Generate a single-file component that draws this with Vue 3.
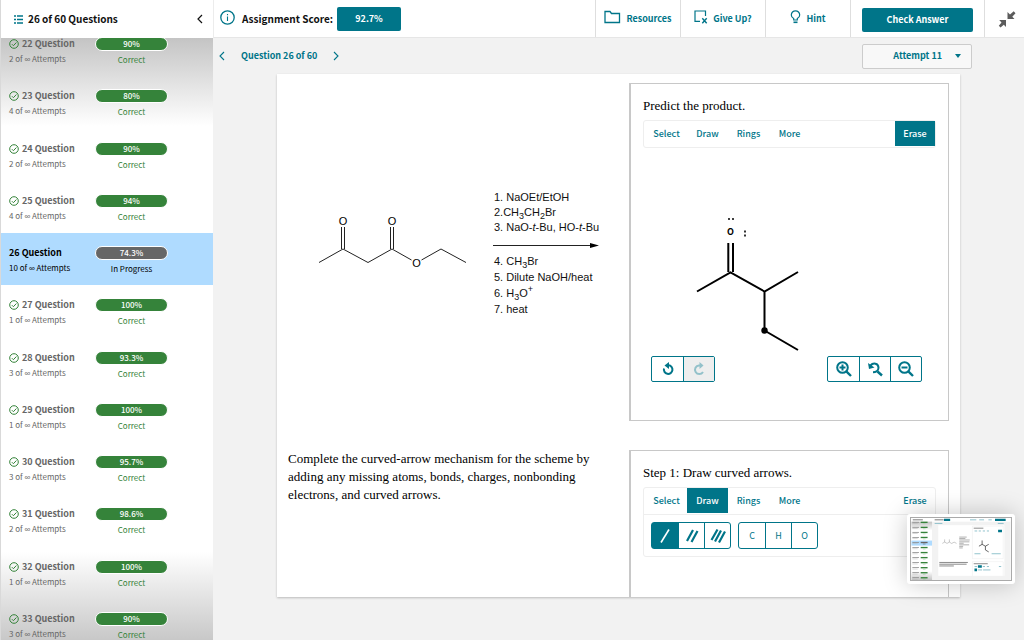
<script setup>
const questions = [
  { n: 22, tries: 2, score: '90%' },
  { n: 23, tries: 4, score: '80%' },
  { n: 24, tries: 2, score: '90%' },
  { n: 25, tries: 4, score: '94%' },
  { n: 26, tries: 10, score: '74.3%', current: true },
  { n: 27, tries: 1, score: '100%' },
  { n: 28, tries: 3, score: '93.3%' },
  { n: 29, tries: 1, score: '100%' },
  { n: 30, tries: 3, score: '95.7%' },
  { n: 31, tries: 2, score: '98.6%' },
  { n: 32, tries: 1, score: '100%' },
  { n: 33, tries: 3, score: '90%' },
]
const tabs = ['Select', 'Draw', 'Rings', 'More']
const atoms = ['C', 'H', 'O']
</script>

<template>
  <div class="app">
    <aside class="sidebar">
      <header class="side-head">
        <svg class="list-icon" width="9" height="9" viewBox="0 0 9 9" aria-hidden="true">
          <path d="M0 1h2M3 1h6M0 4.5h2M3 4.5h6M0 8h2M3 8h6" stroke="#007589" stroke-width="1.4" />
        </svg>
        <span class="side-title">26 of 60 Questions</span>
        <button class="bare collapse" aria-label="Collapse question list">
          <svg width="6" height="10" viewBox="0 0 6 10"><path d="M5 1L1 5l4 4" fill="none" stroke="#111" stroke-width="1.2" /></svg>
        </button>
      </header>
      <div class="scroll">
        <ul class="questions">
          <li v-for="q in questions" :key="q.n" :class="{ current: q.current }">
            <div class="q-info">
              <div class="q-name">
                <svg v-if="!q.current" width="10" height="10" viewBox="0 0 10 10" aria-hidden="true">
                  <circle cx="5" cy="5" r="4.3" fill="none" stroke="#35833a" stroke-width="1" />
                  <path d="M2.9 5.2l1.5 1.5 3-3.2" fill="none" stroke="#35833a" stroke-width="1" />
                </svg>
                <span>{{ q.n }} Question</span>
              </div>
              <div class="q-tries">{{ q.tries }} of <span class="inf">∞</span> Attempts</div>
            </div>
            <div class="q-result">
              <div class="pill">{{ q.score }}</div>
              <div class="q-state">{{ q.current ? 'In Progress' : 'Correct' }}</div>
            </div>
          </li>
        </ul>
      </div>
    </aside>

    <main class="main">
      <header class="topbar">
        <svg class="info" width="15" height="15" viewBox="0 0 15 15" aria-hidden="true">
          <circle cx="7.5" cy="7.5" r="6.7" fill="none" stroke="#007589" stroke-width="1.3" />
          <path d="M7.5 6.5V11M7.5 4v1.2" stroke="#007589" stroke-width="1.1" />
        </svg>
        <span class="score-label">Assignment Score:</span>
        <span class="score">92.7%</span>
        <nav class="actions">
          <button class="action">
            <svg width="17" height="14" viewBox="0 0 17 14"><path d="M1 12.5V1.5h5l1.5 2H15.500v9z" fill="none" stroke="#007589" stroke-width="1.3" /></svg>
            Resources
          </button>
          <button class="action">
            <svg width="14" height="14" viewBox="0 0 14 14">
              <path d="M6 11.400H1V1h10.500v5" fill="none" stroke="#007589" stroke-width="1.2" />
              <path d="M8.300 8.200l4.400 5M12.700 8.200l-4.400 5" stroke="#007589" stroke-width="1.400" />
            </svg>
            Give Up?
          </button>
          <button class="action">
            <svg width="11" height="14" viewBox="0 0 11 14">
              <path d="M3.700 10V8.600C2.300 7.800 1.300 6.700 1.300 5a4.200 4.200 0 0 1 8.400 0c0 1.700-1 2.800-2.400 3.600V10z" fill="none" stroke="#007589" stroke-width="1.200" />
              <path d="M3.500 12.300h4" stroke="#007589" stroke-width="1.600" />
            </svg>
            Hint
          </button>
          <div class="check-cell"><button class="check">Check Answer</button></div>
          <button class="bare shrink" aria-label="Exit full screen">
            <svg width="18" height="18" viewBox="0 0 18 18">
              <path d="M9.500 2v7H16.500L14.300 6.800 17.500 3.200 15.700 1.200 12 4.500zM1.200 10H8v7L5.800 14.800 2.500 17.500 0.800 15.700 3.500 12.500z" fill="#5c5c5c" />
            </svg>
          </button>
        </nav>
      </header>

      <div class="subbar">
        <button class="bare" aria-label="Previous question">
          <svg width="6" height="10" viewBox="0 0 6 10"><path d="M5 1L1 5l4 4" fill="none" stroke="#007589" stroke-width="1.1" /></svg>
        </button>
        <span class="crumb">Question 26 of 60</span>
        <button class="bare" aria-label="Next question">
          <svg width="6" height="10" viewBox="0 0 6 10"><path d="M1 1l4 4-4 4" fill="none" stroke="#007589" stroke-width="1.1" /></svg>
        </button>
        <button class="attempt">
          Attempt 11
          <svg width="6" height="4" viewBox="0 0 6 4"><path d="M0 0h6L3 4z" fill="#007589" /></svg>
        </button>
      </div>

      <section class="paper">
        <div class="scheme">
          <svg class="reactant" width="155" height="127" viewBox="315 190 155 127" role="img" aria-label="Ethyl acetoacetate">
            <path d="M319 262.500L343 249l25 13.500L392 249l19.500 11M421.500 260L441 249l25 13.500M341.500 249V227M344.500 249V227M390.500 249V227M393.500 249V227" fill="none" stroke="#222" stroke-width="1" />
            <text x="343" y="225" text-anchor="middle">O</text>
            <text x="392" y="225" text-anchor="middle">O</text>
            <text x="416.500" y="267" text-anchor="middle">O</text>
          </svg>
          <div class="conditions">
            <div class="above">
              <div>1. NaOEt/EtOH</div>
              <div>2.CH<sub>3</sub>CH<sub>2</sub>Br</div>
              <div>3. NaO-<i>t</i>-Bu, HO-<i>t</i>-Bu</div>
            </div>
            <svg class="arrow" width="106" height="18" viewBox="0 0 106 18" aria-hidden="true">
              <path d="M0 10.500h98" stroke="#222" stroke-width="1" />
              <path d="M97 8l9 2.500-9 2.500z" fill="#000" />
            </svg>
            <div class="below">
              <div>4. CH<sub>3</sub>Br</div>
              <div>5. Dilute NaOH/heat</div>
              <div>6. H<sub>3</sub>O<sup>+</sup></div>
              <div>7. heat</div>
            </div>
          </div>
        </div>

        <article class="panel">
          <h2>Predict the product.</h2>
          <div class="editor">
            <div class="tabs">
              <button v-for="t in tabs" :key="t" class="tab">{{ t }}</button>
              <button class="tab erase on">Erase</button>
            </div>
          </div>
          <svg class="canvas" viewBox="643 148 293 208" role="img" aria-label="3-methylpentan-2-one">
            <path d="M697 291.500l33.500-19 34 19L798 272M764.500 291.500v39L798 350M728.300 272V243M733 272V243" fill="none" stroke="#000" stroke-width="2" />
            <circle cx="764.500" cy="330.500" r="3.200" />
            <text x="730.500" y="235" text-anchor="middle">O</text>
            <path d="M728 219h2M732 219h2M745 230.500v2M745 234.500v2" stroke="#000" stroke-width="1.600" />
          </svg>
          <div class="tools">
            <div class="group">
              <button aria-label="Undo">
                <svg width="14" height="14" viewBox="0 0 14 14"><path d="M3 6.500a4.300 4.300 0 1 0 4.500-3.200" fill="none" stroke="#007589" stroke-width="2" /><path d="M3.500 3.500L8 0v7z" fill="#007589" /></svg>
              </button>
              <button class="disabled" disabled aria-label="Redo">
                <svg width="14" height="14" viewBox="0 0 14 14"><path d="M11 10a4.300 4.300 0 1 1-4-6.500h1" fill="none" stroke="#93c1ca" stroke-width="2" /><path d="M11.500 3.500L7.500 0v7z" fill="#93c1ca" /></svg>
              </button>
            </div>
            <div class="group">
              <button aria-label="Zoom in">
                <svg width="16" height="16" viewBox="0 0 16 16"><circle cx="6.500" cy="6.500" r="5.300" fill="none" stroke="#007589" stroke-width="2" /><path d="M10.300 10.300L15 15" stroke="#007589" stroke-width="2.400" /><path d="M3.500 6.500h6M6.500 3.500v6" stroke="#007589" stroke-width="2" /></svg>
              </button>
              <button aria-label="Reset zoom">
                <svg width="16" height="16" viewBox="0 0 16 16"><path d="M3.500 4.500C6 1.500 11.500 2 11.500 6.800c0 3-2.800 4.400-5.500 4.400" fill="none" stroke="#007589" stroke-width="2" /><path d="M1 2l1 6 5.500-1.500z" fill="#007589" /><path d="M10.500 10.500L15 14.500" stroke="#007589" stroke-width="2.400" /></svg>
              </button>
              <button aria-label="Zoom out">
                <svg width="16" height="16" viewBox="0 0 16 16"><circle cx="6.500" cy="6.500" r="5.300" fill="none" stroke="#007589" stroke-width="2" /><path d="M10.300 10.300L15 15" stroke="#007589" stroke-width="2.400" /><path d="M3.500 6.500h6" stroke="#007589" stroke-width="2" /></svg>
              </button>
            </div>
          </div>
        </article>

        <p class="prompt">Complete the curved-arrow mechanism for the scheme by adding any missing atoms, bonds, charges, nonbonding electrons, and curved arrows.</p>

        <article class="panel open">
          <h2>Step 1: Draw curved arrows.</h2>
          <div class="editor">
            <div class="tabs">
              <button v-for="t in tabs" :key="t" class="tab" :class="{ on: t === 'Draw' }">{{ t }}</button>
              <button class="tab erase">Erase</button>
            </div>
            <div class="palette">
              <div class="bonds">
                <button class="on" aria-label="Single bond">
                  <svg width="16" height="16" viewBox="0 0 16 16"><path d="M4 14.500l8-13" stroke="#fff" stroke-width="1.600" /></svg>
                </button>
                <button aria-label="Double bond">
                  <svg width="16" height="16" viewBox="0 0 16 16"><path d="M3 13L9 2M7.500 14L13.500 3" stroke="#007589" stroke-width="2.200" /></svg>
                </button>
                <button aria-label="Triple bond">
                  <svg width="16" height="16" viewBox="0 0 16 16"><path d="M1.500 12L7.500 1.500M5 13.500l6-11M9 14.500l6-11" stroke="#007589" stroke-width="2.200" /></svg>
                </button>
              </div>
              <div class="bonds atoms">
                <button v-for="a in atoms" :key="a">{{ a }}</button>
              </div>
            </div>
          </div>
        </article>
      </section>
    </main>

    <div class="preview">
      <svg viewBox="0 0 1024 640" width="102" height="64" role="img" aria-label="Page preview">
        <defs>
          <linearGradient id="fade" x1="0" y1="0" x2="0" y2="1">
            <stop offset="0" stop-color="#c4c4c4" /><stop offset=".15" stop-color="#fff" />
            <stop offset=".85" stop-color="#fff" /><stop offset="1" stop-color="#c4c4c4" />
          </linearGradient>
        </defs>
        <rect width="1024" height="640" fill="#f2f2f2" />
        <rect width="1024" height="38" fill="#fff" />
        <rect y="38" width="213" height="602" fill="url(#fade)" />
        <rect y="233" width="213" height="52" fill="#afdbff" />
        <rect x="277" y="74" width="683" height="523" fill="#fff" />
        <g v-for="(q, i) in questions" :key="q.n">
          <rect x="96" :y="38 + i * 52" width="71" height="14" :fill="q.current ? '#666' : '#35833a'" />
          <rect x="10" :y="40 + i * 52" width="68" height="8" fill="#8a8a8a" />
          <rect x="10" :y="56 + i * 52" width="55" height="5" fill="#b5b5b5" />
          <rect x="118" :y="58 + i * 52" width="28" height="5" :fill="q.current ? '#555' : '#9ec9a0'" />
        </g>
        <path d="M14 19h104M240 19h92" stroke="#666" stroke-width="9" />
        <path d="M240 56h80M605 19h65M700 19h50M795 19h35M892 56h60" stroke="#73b3bf" stroke-width="8" />
        <path d="M336 7h64v24h-64zM863 8h110v24H863zM895 122h40v25h-40zM687 488h40v25h-40zM651 522h26v27h-26z" fill="#007589" />
        <path d="M319 262l24-13 25 13 24-13 24 14 25-14 25 13M343 249v-28M392 249v-28" fill="none" stroke="#777" stroke-width="4" />
        <path d="M494 197h77M494 212h63M494 227h108M494 246h105M494 261h46M494 277h102M494 293h40M494 309h36" stroke="#777" stroke-width="6" />
        <path d="M697 291l33-19 34 19 34-19M764 291v39l34 20M730 272v-40" fill="none" stroke="#222" stroke-width="7" />
        <path d="M630 420V84h318v336zM630 597V451h318v146" fill="none" stroke="#ddd" stroke-width="3" />
        <path d="M643 105h100M643 472h145M288 459h295M288 477h282M288 495h150" stroke="#555" stroke-width="7" />
        <path d="M652 134h27M695 134h22M737 134h23M779 134h22M651 369h62M828 369h94M652 501h27M737 501h23M779 501h22M903 501h24M685 536h45M740 536h76" stroke="#82bac5" stroke-width="9" />
      </svg>
    </div>
  </div>
</template>

<style>
body { margin: 0; }
</style>

<style scoped>
* { box-sizing: border-box; }
.app {
  display: flex;
  height: 100vh;
  overflow: hidden;
  background: #f2f2f2;
  font: 9px/14px "Noto Sans CJK SC", "Source Sans Pro", sans-serif;
  color: #111;
}
button { margin: 0; padding: 0; border: 0; font: inherit; color: inherit; background: none; cursor: pointer; }
svg { display: block; flex: none; }
.bare { display: flex; align-items: center; justify-content: center; padding: 4px; }

.sidebar { display: flex; flex-direction: column; flex: none; width: 213px; border-left: 1px solid #d9d9d9; background: #fff; }
.side-head { display: flex; align-items: center; height: 38px; flex: none; padding: 0 6px 0 13px; }
.side-title { margin-left: 5px; font-size: 10px; font-weight: 700; }
.collapse { margin-left: auto; }
.scroll {
  display: flex;
  flex: 1;
  min-height: 0;
  overflow: hidden;
  background: linear-gradient(#c4c4c4, #fff 88px, #fff calc(100% - 88px), #c8c8c8);
}
.questions { flex: 1; display: grid; grid-auto-rows: 1fr; margin: -14px 0 -11px; padding: 0; list-style: none; }
.questions li { display: flex; padding: 13px 0 0 7px; color: #666; }
.q-info { width: 87px; }
.q-name { display: flex; align-items: center; gap: 3px; height: 14px; padding-left: 1px; font-size: 9px; font-weight: 700; white-space: nowrap; }
.q-tries { margin-top: 1px; font-size: 8px; padding-left: 1px; white-space: nowrap; }
.inf { font-family: "Liberation Sans", sans-serif; }
.q-result { width: 73px; text-align: center; }
.pill { height: 14px; border: 1px solid #fff; border-radius: 7px; background: #35833a; color: #fff; font-size: 8px; font-weight: 500; line-height: 12px; }
.q-state { margin-top: 2px; font-size: 8px; color: #35833a; }
.questions .current { background: #afdbff; color: #000; }
.current .pill { background: #666; }
.current .q-state { color: #000; }

.main { display: flex; flex-direction: column; flex: 1; min-width: 0; }
.topbar { display: flex; align-items: center; height: 38px; flex: none; padding-left: 6px; border-left: 1px solid #ececec; border-bottom: 1px solid #e6e6e6; background: #fff; font-size: 10px; font-weight: 700; }
.info { margin-bottom: 3px; }
.score-label { margin: 0 4px 0 7px; }
.score { width: 64px; height: 24px; border-radius: 2px; background: #007589; color: #fff; line-height: 24px; text-align: center; font-size: 9px; }
.actions { display: flex; align-self: stretch; margin-left: auto; color: #007589; font-size: 9px; }
.action { display: flex; align-items: center; justify-content: center; gap: 5px; width: 85px; padding-top: 1px; border-left: 1px solid #dedede; }
.action svg { margin-bottom: 5px; }
.check-cell { display: flex; align-items: center; width: 134px; padding: 2px 11px 0; border-left: 1px solid #dedede; }
.check { flex: 1; height: 24px; border-radius: 2px; background: #007589; color: #fff; }
.shrink { width: 40px; padding-left: 8px; border-left: 1px solid #dedede; }

.subbar { display: flex; align-items: center; height: 36px; flex: none; padding: 0 52px 0 2px; color: #007589; font-weight: 700; }
.crumb { margin: 0 12px; }
.attempt { display: flex; align-items: center; justify-content: flex-end; gap: 13px; width: 110px; height: 25px; margin-left: auto; padding-right: 10px; border: 1px solid #ccc; border-radius: 2px; background: #f8f8f8; }

.paper {
  display: grid;
  grid-template-columns: 1fr 320px;
  grid-template-rows: auto 1fr;
  row-gap: 29px;
  flex: 1;
  margin: 0 64px 43px;
  padding: 9px 11px 0 11px;
  background: #fff;
  box-shadow: 0 1px 2px #bbb;
}
.scheme { display: flex; align-items: center; gap: 23px; padding: 2px 0 0 27px; }
.reactant text { font: 11px "Liberation Sans", sans-serif; }
.conditions { font: 11px/15px "Liberation Sans", sans-serif; white-space: nowrap; }
.above, .below { padding-left: 1px; }
.below { line-height: 16px; }
.conditions sub, .conditions sup { font-size: 9px; line-height: 0; }

.panel { border: 1px solid #c8c8c8; border-left-width: 2px; padding: 13px 12px 38px; }
.panel.open { border-bottom: 0; }
h2, .prompt { margin: 0; font: 13px/18px "Liberation Serif", serif; color: #000; }
.prompt { max-width: 310px; }
.editor { margin-top: 5px; border: 1px solid #eee; border-radius: 3px; }
.tabs { display: flex; height: 26px; padding: 0 0 0 2px; }
.tab { width: 41px; height: 25px; color: #007589; font-size: 9px; font-weight: 500; }
.tab.on { background: #007589; color: #fff; }
.erase { width: 40px; margin-left: auto; }
.canvas { width: 100%; height: 208px; }
.canvas text { font: 700 9px "Noto Sans CJK SC", sans-serif; }
.tools { display: flex; justify-content: space-between; padding: 0 14px 0 8px; }
.group { display: flex; border: 1px solid #007589; border-radius: 2px; }
.group button { display: flex; align-items: center; justify-content: center; width: 31px; height: 24px; }
.group button + button { border-left: 1px solid #007589; }
.group .disabled { background: #eee; }
.palette { display: flex; gap: 7px; padding: 7px; border-top: 1px solid #eee; }
.bonds { display: flex; border: 1px solid #007589; border-radius: 3px; color: #007589; }
.bonds button { display: flex; align-items: center; justify-content: center; width: 26px; height: 25px; }
.bonds button + button { border-left: 1px solid #007589; }
.bonds .on { background: #007589; }

.preview { position: absolute; right: 9px; bottom: 56px; padding: 3px; border-radius: 3px; background: #fff; box-shadow: 0 0 24px rgba(0, 0, 0, .22); }
.preview svg { border: 1px solid #aaa; }
</style>
